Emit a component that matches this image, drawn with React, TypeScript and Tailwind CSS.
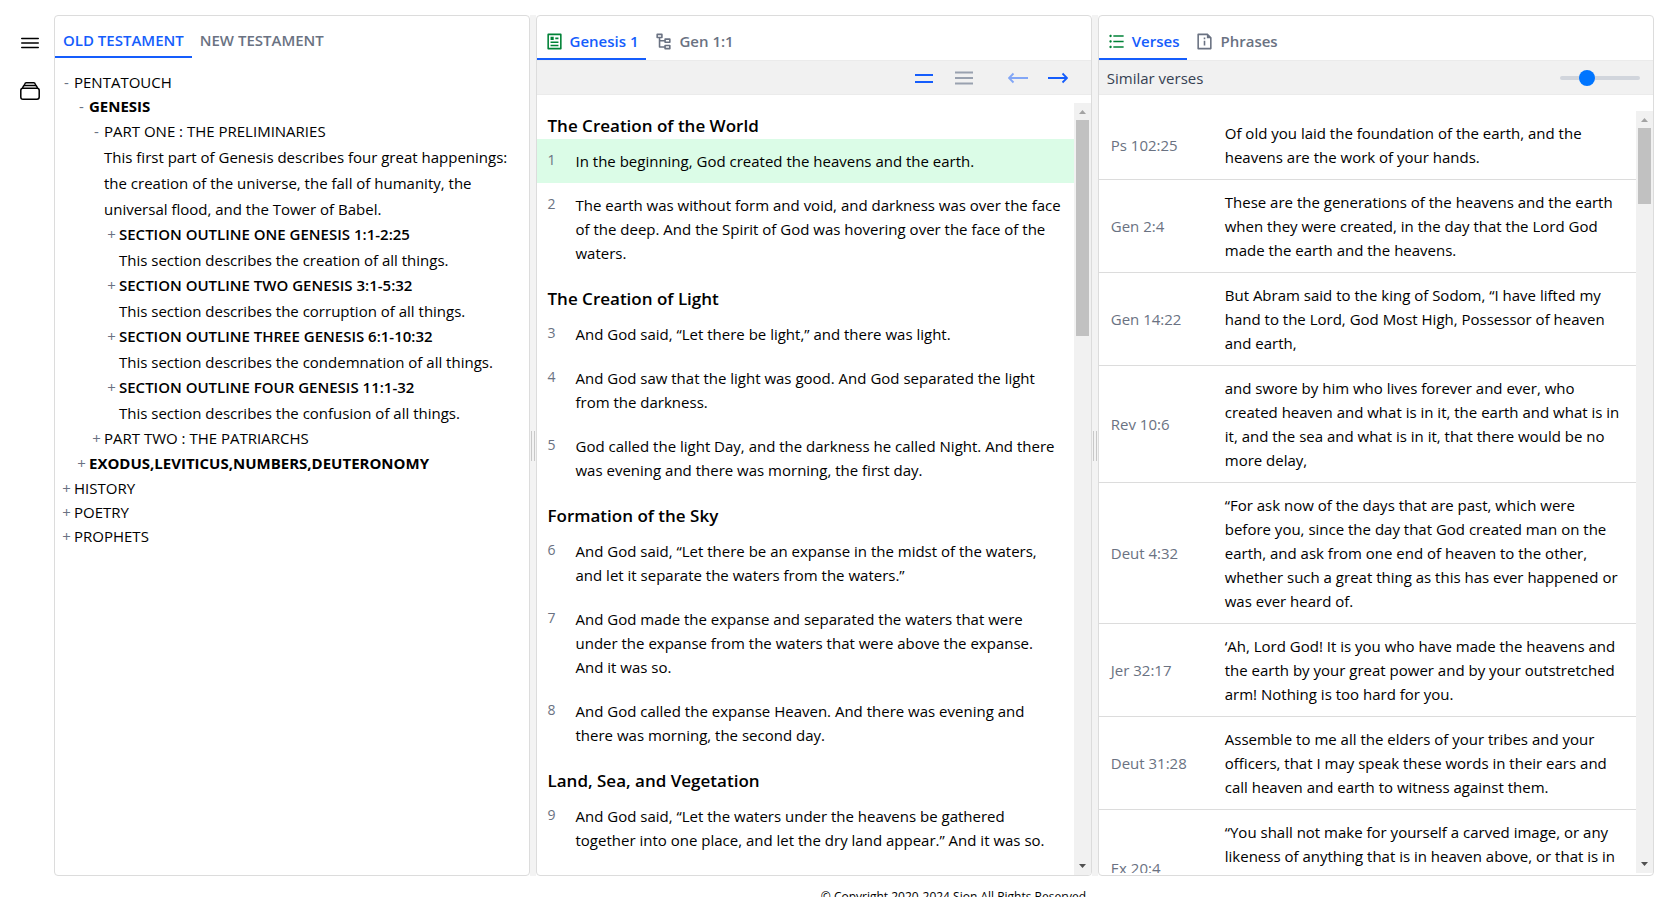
import type { ReactNode } from "react";
import { IoMenuOutline } from "react-icons/io5";
import { RiArticleLine, RiFileInfoLine, RiListUnordered, RiNodeTree } from "react-icons/ri";

type OutlineNode = {
  title: string;
  open?: boolean;
  weight?: "bold" | "semibold";
  note?: string;
  children?: OutlineNode[];
};

type Verse = { number: number; text: string; active?: boolean };

const outline: OutlineNode[] = [
  {
    title: "PENTATOUCH",
    open: true,
    children: [
      {
        title: "GENESIS",
        open: true,
        weight: "bold",
        children: [
          {
            title: "PART ONE : THE PRELIMINARIES",
            open: true,
            note: "This first part of Genesis describes four great happenings: the creation of the universe, the fall of humanity, the universal flood, and the Tower of Babel.",
            children: [
              { title: "SECTION OUTLINE ONE GENESIS 1:1-2:25", weight: "semibold", note: "This section describes the creation of all things." },
              { title: "SECTION OUTLINE TWO GENESIS 3:1-5:32", weight: "semibold", note: "This section describes the corruption of all things." },
              { title: "SECTION OUTLINE THREE GENESIS 6:1-10:32", weight: "semibold", note: "This section describes the condemnation of all things." },
              { title: "SECTION OUTLINE FOUR GENESIS 11:1-32", weight: "semibold", note: "This section describes the confusion of all things." },
            ],
          },
          { title: "PART TWO : THE PATRIARCHS" },
        ],
      },
      { title: "EXODUS,LEVITICUS,NUMBERS,DEUTERONOMY", weight: "bold" },
    ],
  },
  { title: "HISTORY" },
  { title: "POETRY" },
  { title: "PROPHETS" },
];

const passages: { heading: string; verses: Verse[] }[] = [
  {
    heading: "The Creation of the World",
    verses: [
      { number: 1, text: "In the beginning, God created the heavens and the earth.", active: true },
      { number: 2, text: "The earth was without form and void, and darkness was over the face of the deep. And the Spirit of God was hovering over the face of the waters." },
    ],
  },
  {
    heading: "The Creation of Light",
    verses: [
      { number: 3, text: "And God said, “Let there be light,” and there was light." },
      { number: 4, text: "And God saw that the light was good. And God separated the light from the darkness." },
      { number: 5, text: "God called the light Day, and the darkness he called Night. And there was evening and there was morning, the first day." },
    ],
  },
  {
    heading: "Formation of the Sky",
    verses: [
      { number: 6, text: "And God said, “Let there be an expanse in the midst of the waters, and let it separate the waters from the waters.”" },
      { number: 7, text: "And God made the expanse and separated the waters that were under the expanse from the waters that were above the expanse. And it was so." },
      { number: 8, text: "And God called the expanse Heaven. And there was evening and there was morning, the second day." },
    ],
  },
  {
    heading: "Land, Sea, and Vegetation",
    verses: [
      { number: 9, text: "And God said, “Let the waters under the heavens be gathered together into one place, and let the dry land appear.” And it was so." },
    ],
  },
];

const similarVerses = [
  { reference: "Ps 102:25", text: "Of old you laid the foundation of the earth, and the heavens are the work of your hands." },
  { reference: "Gen 2:4", text: "These are the generations of the heavens and the earth when they were created, in the day that the Lord God made the earth and the heavens." },
  { reference: "Gen 14:22", text: "But Abram said to the king of Sodom, “I have lifted my hand to the Lord, God Most High, Possessor of heaven and earth," },
  { reference: "Rev 10:6", text: "and swore by him who lives forever and ever, who created heaven and what is in it, the earth and what is in it, and the sea and what is in it, that there would be no more delay," },
  { reference: "Deut 4:32", text: "“For ask now of the days that are past, which were before you, since the day that God created man on the earth, and ask from one end of heaven to the other, whether such a great thing as this has ever happened or was ever heard of." },
  { reference: "Jer 32:17", text: "‘Ah, Lord God! It is you who have made the heavens and the earth by your great power and by your outstretched arm! Nothing is too hard for you." },
  { reference: "Deut 31:28", text: "Assemble to me all the elders of your tribes and your officers, that I may speak these words in their ears and call heaven and earth to witness against them." },
  { reference: "Ex 20:4", text: "“You shall not make for yourself a carved image, or any likeness of anything that is in heaven above, or that is in the earth beneath, or that is in the water under the earth." },
];

function Tab({ active, icon, children }: { active?: boolean; icon?: ReactNode; children: ReactNode }) {
  return (
    <button
      type="button"
      role="tab"
      aria-selected={!!active}
      className={
        active
          ? "flex items-center gap-[6px] border-b-2 border-blue-600 px-2 text-blue-600"
          : "flex items-center gap-[6px] border-b-2 border-transparent px-2 text-gray-500"
      }
    >
      {icon}
      {children}
    </button>
  );
}

function OutlineItem({ node, root }: { node: OutlineNode; root?: boolean }) {
  const weight =
    node.weight === "bold" ? "font-bold" : node.weight === "semibold" ? "font-semibold" : "";
  return (
    <li>
      <button
        type="button"
        aria-expanded={!!node.open}
        className={root ? "flex text-left leading-6" : "flex text-left leading-[25px]"}
      >
        <span className="w-3 shrink-0 pr-[3px] text-center text-gray-500">{node.open ? "-" : "+"}</span>
        <span className={weight}>{node.title}</span>
      </button>
      {node.note && <p className="pl-3 leading-[26px]">{node.note}</p>}
      {node.children && (
        <ul className="pl-[15px]">
          {node.children.map((child) => (
            <OutlineItem key={child.title} node={child} />
          ))}
        </ul>
      )}
    </li>
  );
}

function Splitter() {
  return (
    <div role="separator" className="flex w-[6px] shrink-0 items-center justify-center gap-[2px] bg-[#f3f3f3]">
      <span className="h-[30px] w-px bg-[#c8c8c8]" />
      <span className="h-[30px] w-px bg-[#c8c8c8]" />
    </div>
  );
}

function ScrollRail({ thumb }: { thumb: ReactNode }) {
  return (
    <div aria-hidden="true" className="flex w-[17px] shrink-0 flex-col items-center bg-[#f1f1f1]">
      <svg viewBox="0 0 17 17" className="size-[17px] shrink-0" fill="#a3a3a3">
        <path d="M8.5 7 12 11H5z" />
      </svg>
      {thumb}
      <svg viewBox="0 0 17 17" className="mt-auto size-[17px] shrink-0" fill="#505050">
        <path d="M8.5 10 5 6h7z" />
      </svg>
    </div>
  );
}

function ToolButton({ label, className, path }: { label: string; className: string; path: string }) {
  return (
    <button type="button" aria-label={label} className={className}>
      <svg viewBox="0 0 20 20" className="size-5" fill="none" stroke="currentColor" strokeWidth="1.8">
        <path d={path} />
      </svg>
    </button>
  );
}

export default function App() {
  return (
    <div className="flex h-screen flex-col overflow-hidden bg-white pt-[15px] font-['Open_Sans','Noto_Sans',sans-serif] text-[15px] leading-6 text-black">
      <div className="flex min-h-0 flex-1 pr-[11px]">
        <nav aria-label="Main" className="flex w-[54px] shrink-0 flex-col items-center gap-6 pt-4 pl-[6px]">
          <button type="button" aria-label="Menu">
            <IoMenuOutline className="size-6" />
          </button>
          <button type="button" aria-label="Library">
            <svg viewBox="0 0 24 24" className="size-6" fill="none" stroke="currentColor" strokeWidth="1.5">
              <rect x="2.800" y="9.300" width="18.400" height="11" rx="2.200" />
              <path d="M4.300 9.500 5.300 7.400Q5.700 6.600 6.700 6.600H17.300Q18.300 6.600 18.700 7.400L19.700 9.500" />
              <path d="M6.200 6.600 6.800 4.900Q7.100 3.700 8.200 3.700H15.800Q16.900 3.700 17.200 4.900L17.800 6.600" />
            </svg>
          </button>
        </nav>

        <section className="flex min-w-0 flex-[475] flex-col rounded border border-[#dcdcdc]">
          <div role="tablist" className="flex h-[42px] shrink-0 pt-2 font-semibold">
            <Tab active>OLD TESTAMENT</Tab>
            <Tab>NEW TESTAMENT</Tab>
          </div>
          <ul className="px-[7px] pt-3">
            {outline.map((node) => (
              <OutlineItem key={node.title} node={node} root />
            ))}
          </ul>
        </section>

        <Splitter />

        <section className="flex min-w-0 flex-[556] flex-col overflow-hidden rounded border border-[#dcdcdc]">
          <div role="tablist" className="flex h-11 shrink-0 pt-2 font-semibold">
            <Tab active icon={<RiArticleLine className="size-[19px] text-green-700" />}>
              Genesis 1
            </Tab>
            <Tab icon={<RiNodeTree className="size-[19px]" />}>Gen 1:1</Tab>
          </div>
          <div className="flex h-[35px] shrink-0 items-center justify-end gap-5 border-y border-[#ebebeb] bg-[#f1f1f1] pr-[23px]">
            <ToolButton label="Compact lines" className="text-blue-600" path="M1 7h18M1 14h18" />
            <ToolButton label="Full lines" className="text-gray-400" path="M1 4.500h18M1 10h18M1 15.500h18" />
            <span className="flex gap-5 pl-[14px]">
              <ToolButton label="Previous chapter" className="text-blue-600 opacity-50" path="M20 10H1M5.500 5.500 1 10l4.500 4.500" />
              <ToolButton label="Next chapter" className="text-blue-600" path="M0 10h19M14.500 5.500 19 10l-4.500 4.500" />
            </span>
          </div>
          <div className="mt-2 flex min-h-0 flex-1">
            <div className="flex min-w-0 flex-1 flex-col gap-px overflow-hidden">
              {passages.map((passage) => (
                <article key={passage.heading}>
                  <h2 className="px-[11px] pt-[10px] text-[17px] leading-[26px] font-semibold">{passage.heading}</h2>
                  {passage.verses.map((verse) => (
                    <div
                      key={verse.number}
                      className={verse.active ? "flex bg-green-100 px-[11px] py-[10px]" : "flex px-[11px] py-[10px]"}
                    >
                      <span className="w-7 shrink-0 text-sm leading-[22px] text-gray-500">{verse.number}</span>
                      <p>{verse.text}</p>
                    </div>
                  ))}
                </article>
              ))}
            </div>
            <ScrollRail thumb={<span className="h-[216px] w-[13px] bg-[#c1c1c1]" />} />
          </div>
        </section>

        <Splitter />

        <section className="flex min-w-0 flex-[556] flex-col overflow-hidden rounded border border-[#dcdcdc] pb-[2px]">
          <div role="tablist" className="flex h-11 shrink-0 pt-2 font-semibold">
            <Tab active icon={<RiListUnordered className="size-[19px] text-green-700" />}>
              Verses
            </Tab>
            <Tab icon={<RiFileInfoLine className="size-[19px]" />}>Phrases</Tab>
          </div>
          <div className="flex h-[35px] shrink-0 items-center justify-between border-y border-[#ebebeb] bg-[#f1f1f1] pr-[13px] pl-2">
            <label htmlFor="similarity" className="text-gray-700">
              Similar verses
            </label>
            <input
              id="similarity"
              type="range"
              min={0}
              max={10}
              defaultValue={3}
              className="h-1 w-20 appearance-none rounded-full bg-gray-300 [&::-webkit-slider-thumb]:size-4 [&::-webkit-slider-thumb]:appearance-none [&::-webkit-slider-thumb]:rounded-full [&::-webkit-slider-thumb]:bg-[#0075ff]"
            />
          </div>
          <div className="mt-4 flex min-h-0 flex-1">
            <div className="min-w-0 flex-1 overflow-hidden">
              {similarVerses.map((verse) => (
                <div key={verse.reference} className="flex items-center border-b border-[#dcdcdc] py-[10px] pr-[14px] pl-3">
                  <a href="#reference" className="w-[114px] shrink-0 text-gray-500">
                    {verse.reference}
                  </a>
                  <p className="min-w-0 flex-1">{verse.text}</p>
                </div>
              ))}
            </div>
            <ScrollRail thumb={<span className="h-[76px] w-[13px] bg-[#c1c1c1]" />} />
          </div>
        </section>
      </div>

      <footer className="h-[21px] shrink-0 overflow-hidden pt-[9px] pl-[242px] text-center text-xs leading-6">
        © Copyright 2020-2024 Sion All Rights Reserved
      </footer>
    </div>
  );
}
